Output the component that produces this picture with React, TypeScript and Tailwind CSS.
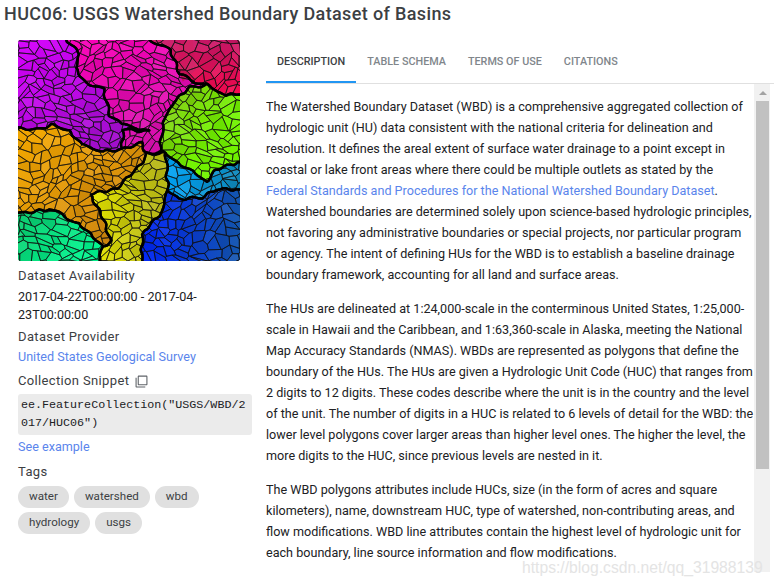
import { useMemo } from "react";

const regions = [
  { id: "purple", from: "#d800ff", to: "#a010cc", x2: 0.8, y2: 1, pts: "0,0 47,0 62,15 57,27 67,42 85,50 92,75 105,85 132,92 105,90 104,110 85,112 63,105 50,90 32,85 20,90 0,88" },
  { id: "pink", from: "#fa00b8", to: "#d810b0", x2: 0.3, y2: 1, pts: "47,0 130,0 152,10 162,35 178,42 188,45 172,48 155,62 145,85 142,112 129,114 127,113 123,103 104,110 105,90 132,92 105,85 92,75 85,50 67,42 57,27 62,15" },
  { id: "red", from: "#c8186a", to: "#f8084e", x2: 0, y2: 1, pts: "130,0 222,0 222,55 208,55 188,45 178,42 162,35 152,10" },
  { id: "green", from: "#84c412", to: "#72f400", x2: 0.6, y2: 0.6, pts: "172,48 188,45 208,55 222,55 222,122 198,130 188,142 148,114 142,112 145,85 155,62" },
  { id: "sky", from: "#00a4f8", to: "#1088b8", x2: 1, y2: 0, pts: "148,114 188,142 198,130 222,122 222,150 198,150 185,158 160,160 150,152" },
  { id: "blue", from: "#0024f8", to: "#1458ac", x2: 1, y2: 0, pts: "150,152 160,160 185,158 198,150 222,150 222,222 124,222 124,196 142,176" },
  { id: "yellow", from: "#e8e800", to: "#b8b814", x2: 0.8, y2: 0, pts: "129,114 148,114 150,152 142,176 124,196 124,222 82,222 84,208 92,202 84,176 72,154 100,150 124,122" },
  { id: "orange", from: "#f8ac00", to: "#c88010", x2: 1, y2: 1, pts: "0,88 20,90 32,85 50,90 63,105 85,112 104,110 123,103 127,113 129,114 124,122 100,150 72,154 84,176 92,202 84,208 60,184 32,170 0,174" },
  { id: "teal", from: "#0cc86c", to: "#00f890", x2: 1, y2: 0.6, pts: "0,174 32,170 60,184 84,208 82,222 0,222" },
];

type Pt = [number, number];

function warp([x, y]: Pt, big: number): Pt {
  const edge = Math.min(1, Math.min(x, y, 222 - x, 222 - y) / 6);
  const k = Math.max(0, edge);
  return [
    x + k * (big * Math.sin(y / 17 + x / 31) + 1.3 * Math.sin(y / 3.1 + x / 5)),
    y + k * (big * Math.sin(x / 19 - y / 27) + 1.3 * Math.sin(x / 2.9 - y / 4.3)),
  ];
}

// points on the frame are pushed out so the thick outline never shows along the edge
const pushOut = (v: number) => (v <= 0 ? -4 : v >= 222 ? 226 : v);

// region outlines get subdivided then warped so shared borders stay shared
function organic(pts: string) {
  const list = pts.split(" ").map((p) => p.split(",").map(Number) as Pt);
  const out: Pt[] = [];
  list.forEach((a, i) => {
    const b = list[(i + 1) % list.length];
    const n = Math.max(1, Math.ceil(Math.hypot(b[0] - a[0], b[1] - a[1]) / 3));
    for (let s = 0; s < n; s++) {
      const p = warp([a[0] + ((b[0] - a[0]) * s) / n, a[1] + ((b[1] - a[1]) * s) / n], 0);
      out.push([pushOut(p[0]), pushOut(p[1])]);
    }
  });
  return out.map((p) => `${p[0].toFixed(1)},${p[1].toFixed(1)}`).join(" ");
}

// seeded voronoi, stretched and warped, for the small sub basins
function buildCells() {
  let seed = 6;
  const rnd = () => {
    seed = (seed * 16807) % 2147483647;
    return seed / 2147483647;
  };
  const cols = 25;
  const rows = 31;
  const seeds: Pt[] = [];
  for (let r = 0; r < rows; r++) {
    for (let c = 0; c < cols; c++) seeds.push([c + rnd() * 0.9, r + rnd() * 0.9]);
  }
  const cells: { d: string; shade: string; op: number }[] = [];
  seeds.forEach((s) => {
    let poly: Pt[] = [
      [s[0] - 3, s[1] - 3],
      [s[0] + 3, s[1] - 3],
      [s[0] + 3, s[1] + 3],
      [s[0] - 3, s[1] + 3],
    ];
    seeds.forEach((o) => {
      if (o === s || Math.hypot(o[0] - s[0], o[1] - s[1]) > 4) return;
      const mx = (s[0] + o[0]) / 2;
      const my = (s[1] + o[1]) / 2;
      const nx = o[0] - s[0];
      const ny = o[1] - s[1];
      const side = (p: Pt) => (p[0] - mx) * nx + (p[1] - my) * ny;
      const next: Pt[] = [];
      poly.forEach((a, i) => {
        const b = poly[(i + 1) % poly.length];
        const sa = side(a);
        const sb = side(b);
        if (sa <= 0) next.push(a);
        if (sa < 0 !== sb < 0) {
          const t = sa / (sa - sb);
          next.push([a[0] + (b[0] - a[0]) * t, a[1] + (b[1] - a[1]) * t]);
        }
      });
      poly = next;
    });
    const d =
      "M" +
      poly
        .map((p) => warp([(p[0] - 1) * 10, (p[1] - 1) * 8], 5))
        .map((p) => `${p[0].toFixed(1)} ${p[1].toFixed(1)}`)
        .join("L") +
      "Z";
    cells.push({ d, shade: rnd() > 0.5 ? "#000000" : "#ffffff", op: rnd() * 0.08 });
  });
  return cells;
}

function BasinMap() {
  const cells = useMemo(buildCells, []);
  const outlines = useMemo(() => regions.map((r) => ({ ...r, pts: organic(r.pts) })), []);
  return (
    <svg viewBox="0 0 222 222" className="block h-[221px] w-[222px] rounded-[3px]">
      <defs>
        {regions.map((r) => (
          <linearGradient key={r.id} id={r.id} x1="0" y1="0" x2={r.x2} y2={r.y2}>
            <stop offset="0" stopColor={r.from} />
            <stop offset="1" stopColor={r.to} />
          </linearGradient>
        ))}
      </defs>
      <rect width="222" height="222" fill="#111111" />
      {outlines.map((r) => (
        <polygon key={r.id} points={r.pts} fill={`url(#${r.id})`} />
      ))}
      <path d="M161 5L175 -2L178 30L165 42L161 30Z" fill="#d0145c" />
      {cells.map((c, i) => (
        <path key={i} d={c.d} fill={c.shade} fillOpacity={c.op} stroke="#101010" strokeOpacity="0.85" strokeWidth="0.8" strokeLinejoin="round" />
      ))}
      {outlines.map((r) => (
        <polygon key={r.id} points={r.pts} fill="none" stroke="#000000" strokeWidth="2.4" strokeLinejoin="round" />
      ))}
    </svg>
  );
}

function Label({ children }: { children: React.ReactNode }) {
  return <div className="text-[13px] leading-[18px] tracking-[0.35px] text-[#3c4043]">{children}</div>;
}

function Chip({ children }: { children: React.ReactNode }) {
  return (
    <span className="flex h-[22px] items-center rounded-full bg-[#e0e0e0] px-[11px] text-[11.6px] text-[#3c4043]">
      {children}
    </span>
  );
}

const tabs = ["DESCRIPTION", "TABLE SCHEMA", "TERMS OF USE", "CITATIONS"];

export default function App() {
  return (
    <div className="relative h-[587px] w-[774px] overflow-hidden bg-white font-['Roboto',sans-serif]">
      <h1 className="pl-1 pt-[3px] text-[18px] font-medium leading-[22px] tracking-[0.36px] text-[#3c4043]">
        HUC06: USGS Watershed Boundary Dataset of Basins
      </h1>

      <div className="mt-[15px] flex">
        {/* left column */}
        <aside className="ml-[18px] w-[234px] shrink-0">
          <BasinMap />
          <div className="mt-[6px]">
            <Label>Dataset Availability</Label>
          </div>
          <p className="mt-[3px] text-[12.6px] leading-[18px] text-[#202124]">2017-04-22T00:00:00 - 2017-04-23T00:00:00</p>
          <div className="mt-[4px]">
            <Label>Dataset Provider</Label>
          </div>
          <a className="mt-[2px] block text-[12.6px] leading-[18px] text-[#5a85ec]">United States Geological Survey</a>
          <div className="mt-[6px] flex items-center gap-[6px]">
            <Label>Collection Snippet</Label>
            <svg viewBox="0 0 24 24" className="h-[13px] w-[13px] fill-[#5f6368]">
              <path d="M3 5H1v16c0 1.1.9 2 2 2h16v-2H3V5zm18-4H7c-1.1 0-2 .9-2 2v14c0 1.1.9 2 2 2h14c1.1 0 2-.9 2-2V3c0-1.1-.9-2-2-2zm0 16H7V3h14v14z" />
            </svg>
          </div>
          <pre className="mt-[4px] whitespace-pre-wrap break-all rounded-[3px] bg-[#ebebeb] px-[3px] pb-[3px] pt-[2px] font-['Liberation_Mono',monospace] text-[11.7px] leading-[18px] text-[#202124]">
            ee.FeatureCollection("USGS/WBD/2017/HUC06")
          </pre>
          <a className="mt-[3px] block text-[12.6px] leading-[18px] text-[#5a85ec]">See example</a>
          <div className="mt-[7px]">
            <Label>Tags</Label>
          </div>
          <div className="mt-[5px] flex flex-wrap gap-x-[5px] gap-y-[4px]">
            <Chip>water</Chip>
            <Chip>watershed</Chip>
            <Chip>wbd</Chip>
            <Chip>hydrology</Chip>
            <Chip>usgs</Chip>
          </div>
        </aside>

        {/* right column */}
        <main className="ml-[14px] min-w-0 flex-1">
          <nav className="flex h-[44px] border-b border-[#e0e0e0] pr-[2px]">
            {tabs.map((t, i) => (
              <div
                key={t}
                className={
                  i === 0
                    ? "-mb-px flex h-[43px] items-center border-b-2 border-[#2196f3] px-[11px] pt-[3px] text-[10.8px] font-medium text-[#3c4043]"
                    : "flex h-[43px] items-center px-[11px] pt-[1px] text-[10.8px] font-medium text-[#80868b]"
                }
              >
                {t}
              </div>
            ))}
          </nav>
          <div className="flex">
            <div className="h-[497px] w-[489px] shrink-0 overflow-hidden pt-[12px] text-[12.6px] leading-[21px] text-[#202124]">
              <p>
                The Watershed Boundary Dataset (WBD) is a comprehensive aggregated collection of hydrologic unit (HU)
                data consistent with the national criteria for delineation and resolution. It defines the areal extent
                of surface water drainage to a point except in coastal or lake front areas where there could be multiple
                outlets as stated by the{" "}
                <a className="text-[#5a85ec]">Federal Standards and Procedures for the National Watershed Boundary Dataset</a>
                . Watershed boundaries are determined solely upon science-based hydrologic principles, not favoring any
                administrative boundaries or special projects, nor particular program or agency. The intent of defining
                HUs for the WBD is to establish a baseline drainage boundary framework, accounting for all land and
                surface areas.
              </p>
              <p className="mt-[13px]">
                The HUs are delineated at 1:24,000-scale in the conterminous United States, 1:25,000-scale in Hawaii and
                the Caribbean, and 1:63,360-scale in Alaska, meeting the National Map Accuracy Standards (NMAS). WBDs are
                represented as polygons that define the boundary of the HUs. The HUs are given a Hydrologic Unit Code
                (HUC) that ranges from 2 digits to 12 digits. These codes describe where the unit is in the country and
                the level of the unit. The number of digits in a HUC is related to 6 levels of detail for the WBD: the
                lower level polygons cover larger areas than higher level ones. The higher the level, the more digits to
                the HUC, since previous levels are nested in it.
              </p>
              <p className="mt-[13px]">
                The WBD polygons attributes include HUCs, size (in the form of acres and square kilometers), name,
                downstream HUC, type of watershed, non-contributing areas, and flow modifications. WBD line attributes
                contain the highest level of hydrologic unit for each boundary, line source information and flow
                modifications.
              </p>
              {/* next paragraph, only the tips of its tall letters are in frame */}
              <div aria-hidden className="mt-[13px] flex pl-[111px]">
                <span>l</span>
                <span className="ml-[12px]">l</span>
                <span className="ml-[8px]">l</span>
                <span className="ml-[47px]">l</span>
              </div>
            </div>
            <div className="ml-[-1px] h-[488px] w-[16px] shrink-0 bg-[#f1f1f1] pl-[2px]">
              <div className="flex h-[17px] w-[13px] items-center justify-center">
                <div className="h-0 w-0 border-x-[4px] border-b-[4px] border-x-transparent border-b-[#a3a3a3]" />
              </div>
              <div className="h-[368px] w-[13px] bg-[#c1c1c1]" />
            </div>
          </div>
        </main>
      </div>

      {/* csdn watermark */}
      <div className="absolute left-[522px] top-[557px] font-['Liberation_Sans',sans-serif] text-[15.7px] leading-[22px] text-[#e4e4e4]">
        https://blog.csdn.net/qq_31988139
      </div>
    </div>
  );
}
